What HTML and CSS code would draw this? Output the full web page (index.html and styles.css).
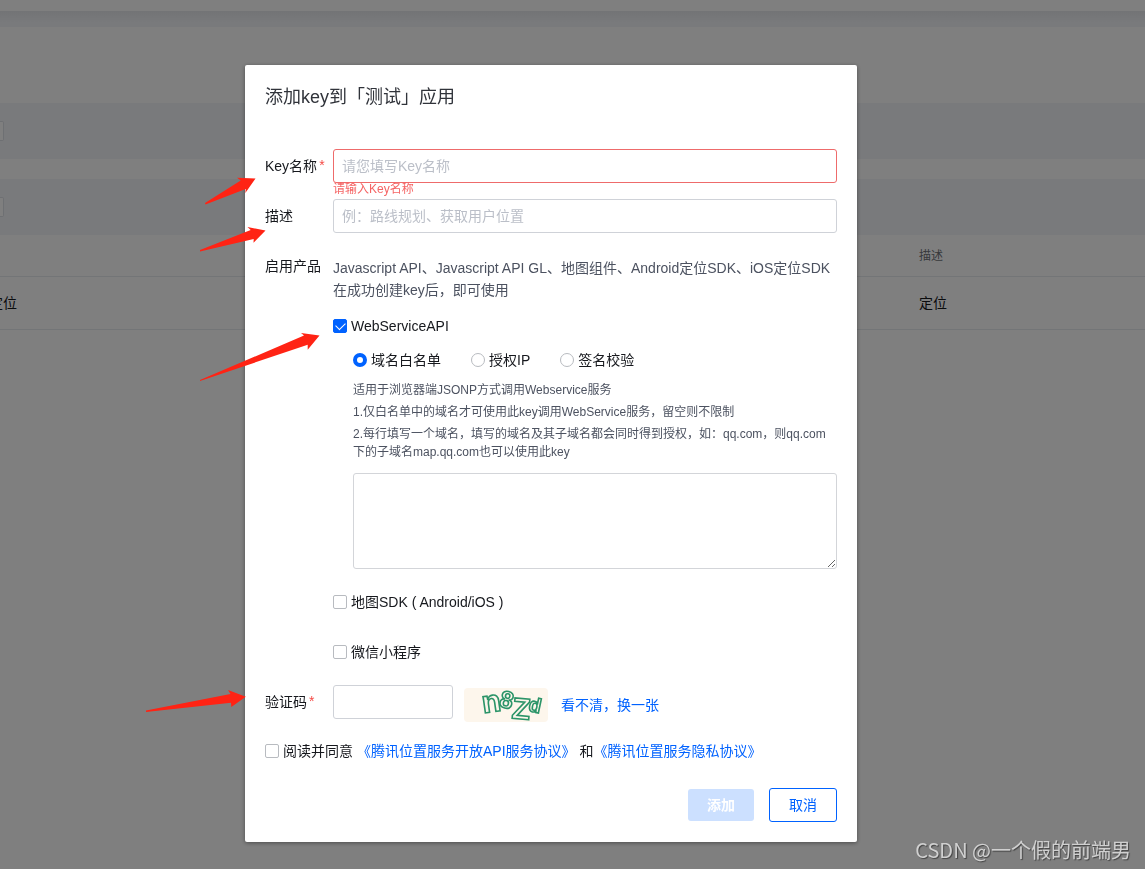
FILE: index.html
```html
<!DOCTYPE html>
<html lang="zh-CN">
<head>
<meta charset="utf-8">
<title>添加key</title>
<meta name="viewport" content="width=device-width, initial-scale=1">
<link rel="stylesheet" href="styles.css">
</head>
<body>
<div class="page">
  <div class="topbar"></div>
  <div class="spacer"></div>
  <div class="heading"></div>
  <div class="filter"><span class="field-end"></span></div>
  <div class="gap"></div>
  <div class="filter"><span class="field-end"></span></div>
  <table class="list">
    <thead><tr><th class="first"></th><th>描述</th></tr></thead>
    <tbody><tr><td class="first">定位</td><td>定位</td></tr></tbody>
  </table>
</div>

<div class="mask">
  <form class="dialog" role="dialog" aria-labelledby="title">
    <h1 class="title" id="title">添加key到「测试」应用</h1>

    <div class="row">
      <label class="label" for="name">Key名称<span class="star">*</span></label>
      <div class="control">
        <input class="input invalid" id="name" type="text" placeholder="请您填写Key名称">
        <p class="error">请输入Key名称</p>
      </div>
    </div>

    <div class="row">
      <label class="label" for="desc">描述</label>
      <div class="control">
        <input class="input" id="desc" type="text" placeholder="例：路线规划、获取用户位置">
      </div>
    </div>

    <div class="row products">
      <span class="label">启用产品</span>
      <div class="control">
        <p class="intro">Javascript API、Javascript API GL、地图组件、Android定位SDK、iOS定位SDK在成功创建key后，即可使用</p>
        <label class="choice"><input class="box" type="checkbox" checked>WebServiceAPI</label>
        <div class="sub">
          <div class="radios">
            <label class="choice"><input class="dot" type="radio" name="auth" checked>域名白名单</label>
            <label class="choice"><input class="dot" type="radio" name="auth">授权IP</label>
            <label class="choice"><input class="dot" type="radio" name="auth">签名校验</label>
          </div>
          <div class="hints">
            <p>适用于浏览器端JSONP方式调用Webservice服务</p>
            <p>1.仅白名单中的域名才可使用此key调用WebService服务，留空则不限制</p>
            <p>2.每行填写一个域名，填写的域名及其子域名都会同时得到授权，如：qq.com，则qq.com下的子域名map.qq.com也可以使用此key</p>
          </div>
          <textarea class="domains" aria-label="域名白名单"></textarea>
        </div>
        <label class="choice spaced"><input class="box" type="checkbox">地图SDK ( Android/iOS )</label>
        <label class="choice spaced"><input class="box" type="checkbox">微信小程序</label>
      </div>
    </div>

    <div class="row verify">
      <label class="label" for="code">验证码<span class="star">*</span></label>
      <div class="control verify-control">
        <input class="input code" id="code" type="text">
        <svg class="captcha" viewBox="0 0 84 34" role="img" aria-label="n8Zd">
          <rect width="84" height="34" rx="4" fill="#fdf6ec"/>
          <g class="captcha-text">
            <text x="18" y="24" font-size="31" transform="rotate(-8 27 16)">n</text>
            <text x="36" y="20" font-size="24" transform="rotate(14 42 12)">8</text>
            <text x="48" y="31" font-size="30" transform="rotate(5 57 22)">Z</text>
            <text x="65" y="24" font-size="20" transform="rotate(12 70 17)">d</text>
          </g>
        </svg>
        <a class="link refresh" href="#">看不清，换一张</a>
      </div>
    </div>

    <div class="agree">
      <label class="choice"><input class="box" type="checkbox">阅读并同意</label>
      <span class="terms"><a class="link" href="#">《腾讯位置服务开放API服务协议》</a> 和<a class="link" href="#">《腾讯位置服务隐私协议》</a></span>
    </div>

    <div class="actions">
      <button class="btn primary" type="submit" disabled>添加</button>
      <button class="btn" type="button">取消</button>
    </div>
  </form>
</div>

<svg class="arrows" width="400" height="800" viewBox="0 0 400 800" fill="#ff2314" aria-hidden="true">
  <path d="M205 203L240.7 180.5L237 177.7L255.5 178.4L245.3 193L245.7 189L205.5 204.5Z"/>
  <path d="M200 250L250.7 230L247.5 227L265.5 230.5L253.5 242.7L253.7 239L200 251.5Z"/>
  <path d="M200 380L304 335.5L301 333L319.5 335.6L307.7 349.7L307.7 344.8L200 381Z"/>
  <path d="M146 710.5L230.5 694L228 690L245.8 696.7L231.3 707L231 702.7L146 712Z"/>
</svg>
<div class="watermark">CSDN @一个假的前端男</div>
</body>
</html>
```
FILE: styles.css
```css
* {
  box-sizing: border-box;
}

body {
  margin: 0;
  min-height: 100vh;
  overflow: hidden;
  background: #fff;
  color: #16181d;
  font: 14px/20px "Liberation Sans", "Noto Sans CJK SC", sans-serif;
}

p, h1 {
  margin: 0;
}

/* Page behind the dialog */
.topbar {
  height: 11px;
}

.spacer {
  height: 16px;
  background: linear-gradient(#e6e8ec, #f3f5f9 12px);
}

.heading {
  height: 76px;
}

.filter {
  display: flex;
  align-items: center;
  height: 56px;
  background: #f3f5f9;
}

.field-end {
  width: 4px;
  height: 20px;
  background: #fff;
  border: 1px solid #dde0e6;
  border-left: 0;
  border-radius: 0 2px 2px 0;
}

.gap {
  height: 20px;
}

.list {
  width: 100%;
  border-collapse: separate;
  border-spacing: 0;
  table-layout: fixed;
}

.list th,
.list td {
  height: 53px;
  padding: 0;
  border-bottom: 1px solid #e7eaef;
  text-align: left;
  font-weight: 400;
}

.list th {
  height: 42px;
  color: #6e7278;
  font-size: 12px;
}

.list .first {
  width: 919px;
  text-indent: -11px;
}

/* Dialog */
.mask {
  position: fixed;
  inset: 0;
  display: flex;
  justify-content: center;
  align-items: flex-start;
  padding: 65px 43px 0 0;
  background: rgba(0, 0, 0, .5);
}

.dialog {
  width: 612px;
  padding: 20px;
  background: #fff;
  border-radius: 2px;
  box-shadow: 0 1px 4px rgba(0, 0, 0, .4);
}

.title {
  margin-bottom: 40px;
  font-size: 18px;
  font-weight: 400;
  line-height: 24px;
  color: #30333a;
}

.row {
  display: flex;
}

.label {
  flex: none;
  width: 68px;
  line-height: 34px;
  white-space: nowrap;
}

.star {
  display: inline-block;
  margin-left: 2px;
  line-height: 20px;
  padding-bottom: 4px;
  vertical-align: middle;
  color: #f54a45;
}

.control {
  flex: 1;
  min-width: 0;
}

.input {
  display: block;
  width: 100%;
  height: 34px;
  padding: 0 8px;
  border: 1px solid #cfd2d8;
  border-radius: 3px;
  background: #fff;
  color: inherit;
  font: inherit;
  outline: 0;
}

.input::placeholder {
  color: #bbbfc8;
}

.input.invalid {
  border-color: #ee6b6b;
}

.error {
  height: 16px;
  font-size: 12px;
  line-height: 12px;
  color: #f56464;
}

.products {
  margin-top: 16px;
}

.intro {
  margin: 8px 0 15px;
  line-height: 22px;
  color: #4c5260;
}

.choice {
  display: flex;
  align-items: center;
  gap: 4px;
  white-space: nowrap;
}

.box,
.dot {
  appearance: none;
  flex: none;
  width: 14px;
  height: 14px;
  margin: 0;
  border: 1px solid #b8bbc0;
  border-radius: 2px;
  background: #fff;
}

.dot {
  border-radius: 50%;
}

.dot:checked {
  border: 4px solid #0062ff;
}

.box:checked {
  display: grid;
  place-items: center;
  border-color: #0062ff;
  background: #0062ff;
}

.box:checked::before {
  content: "";
  width: 8px;
  height: 5px;
  margin-bottom: 3px;
  border: solid #fff;
  border-width: 0 0 1px 1px;
  transform: rotate(-45deg);
}

.sub {
  padding-left: 20px;
}

.radios {
  display: flex;
  gap: 30px;
  margin: 14px 0 11px;
}

.hints {
  display: grid;
  gap: 4px;
  padding-right: 8px;
  font-size: 12px;
  line-height: 18px;
  color: #4c5260;
}

.domains {
  display: block;
  width: 100%;
  height: 96px;
  margin-top: 12px;
  border: 1px solid #d3d5d9;
  border-radius: 3px;
  font: inherit;
  outline: 0;
}

.spaced {
  margin-top: 23px;
  margin-bottom: 30px;
}

.spaced + .spaced {
  margin-top: 0;
  margin-bottom: 23px;
}

.verify-control {
  display: flex;
  align-items: flex-start;
}

.code {
  width: 120px;
}

.captcha {
  width: 84px;
  height: 34px;
  margin: 3px 13px 0 11px;
}

.captcha-text {
  fill: #fdf6ec;
  stroke: #2b9468;
  stroke-width: 1.6;
  font-family: "Liberation Sans", sans-serif;
  font-weight: 700;
}

.link {
  color: #0062ff;
  text-decoration: none;
}

.refresh {
  margin-top: 10px;
}

.agree {
  display: flex;
  gap: 4px;
  margin-top: 19px;
}

.terms {
  white-space: nowrap;
}

.actions {
  display: flex;
  justify-content: flex-end;
  align-items: center;
  gap: 15px;
  margin-top: 27px;
}

.btn {
  width: 68px;
  height: 34px;
  padding: 0;
  border: 1px solid #0062ff;
  border-radius: 3px;
  background: #fff;
  color: #0062ff;
  font: inherit;
}

.btn.primary {
  width: 66px;
  height: 32px;
  border: 0;
  background: #cce0ff;
  color: #fff;
  font-weight: 700;
}

.arrows {
  position: fixed;
  top: 0;
  left: 0;
  pointer-events: none;
}

.watermark {
  position: fixed;
  right: 14px;
  bottom: 7px;
  font: 20px/24px "Noto Sans CJK SC", sans-serif;
  color: #d0d0d0;
  text-shadow: 1px 1px 1px #444;
}
```
